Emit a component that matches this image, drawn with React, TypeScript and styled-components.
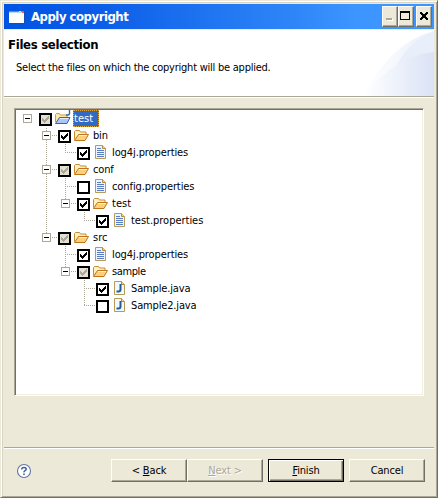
import React from 'react';
import styled, { createGlobalStyle } from 'styled-components';

const face = '#ece9d8';
const shade = '#aca899';
const dark = '#716f64';

const GlobalStyle = createGlobalStyle`
  *, *::before, *::after { box-sizing: border-box; }
  body { margin: 0; background: ${face}; }
`;

const Dialog = styled.div`
  display: flex;
  flex-direction: column;
  width: 438px;
  height: 498px;
  padding: 2px;
  background: ${face};
  border: 1px solid;
  border-color: ${face} ${dark} ${dark} ${face};
  box-shadow: inset 1px 1px #fff, inset -1px -1px ${shade}, inset 2px 2px #d8d4c8;
  font: 11px/17px 'DejaVu Sans Condensed', 'DejaVu Sans', sans-serif;
  font-stretch: condensed;
  color: #000;
  overflow: hidden;
`;

const Content = styled.div`
  display: flex;
  flex-direction: column;
  flex: 1;
  margin: 1px;
`;

const TitleBar = styled.div`
  display: flex;
  align-items: center;
  height: 25px;
  padding: 0 2px 0 5px;
  background: linear-gradient(90deg, #0054e3 0%, #0a5ce7 20%, #2f86f8 68%, #3d95ff 82%, #3d95ff 100%);
`;

const Title = styled.div`
  flex: 1;
  margin-left: 6px;
  color: #fff;
  font-size: 13px;
  font-weight: bold;
  letter-spacing: -0.48px;
`;

const raised = `
  background: ${face};
  border: 1px solid;
  border-color: #fff ${dark} ${dark} #fff;
  box-shadow: inset -1px -1px ${shade};
`;

const CaptionButton = styled.button<{ $gap?: number }>`
  ${raised}
  width: 16px;
  height: 21px;
  padding: 0;
  margin-left: ${p => p.$gap ?? 0}px;
  display: block;
`;

const Header = styled.div`
  display: flex;
  justify-content: space-between;
  height: 69px;
  padding-bottom: 1px;
  border-top: 1px solid #e3eefa;
  border-bottom: 1px solid #fff;
  background: linear-gradient(${shade}, ${shade}) bottom / 100% 1px no-repeat padding-box #fff;
`;

const HeaderText = styled.div`
  padding: 6px 0 0 4px;
  white-space: nowrap;
`;

const Heading = styled.div`
  font-size: 13px;
  font-weight: bold;
  line-height: 18px;
  letter-spacing: -0.3px;
`;

const Description = styled.div`
  margin: 5px 0 0 8px;
  line-height: 17px;
  letter-spacing: -0.24px;
`;

const Tree = styled.div`
  width: 410px;
  height: 288px;
  margin: 10px 0 0 10px;
  background: #fff;
  border: 1px solid;
  border-color: ${shade} #fff #fff ${shade};
  box-shadow: inset 1px 1px ${dark}, inset -1px -1px #f1efe2;
  padding: 1px;
`;

const TreeRow = styled.div`
  display: flex;
  align-items: flex-start;
  height: 17px;
`;

const Check = styled.span<{ $partial?: boolean }>`
  width: 13px;
  height: 13px;
  margin-top: 3px;
  border: 2px solid #000;
  background: ${p => (p.$partial ? '#e3e1d3' : '#fff')};
  svg { display: block; }
`;

const IconSlot = styled.span`
  width: 16px;
  height: 16px;
  margin: 0 2px 0 3px;
  svg { display: block; overflow: visible; }
`;

const Label = styled.span<{ $selected?: boolean; $spacing: number }>`
  height: 17px;
  padding: 1px 1px 0;
  line-height: 16px;
  letter-spacing: ${p => p.$spacing}px;
  white-space: nowrap;
  width: ${p => (p.$selected ? '26px' : 'auto')};
  color: ${p => (p.$selected ? '#fff' : '#000')};
  background: ${p => (p.$selected ? '#316ac5' : 'transparent')};
  outline: ${p => (p.$selected ? '1px dotted #e6a53a' : 'none')};
  outline-offset: -1px;
`;

const Footer = styled.div`
  display: flex;
  align-items: flex-start;
  height: 47px;
  margin-top: auto;
  padding: 11px 9px 0 12px;
  border-top: 1px solid ${shade};
  box-shadow: inset 0 1px #fff;
`;

const Help = styled.span`
  width: 16px;
  height: 16px;
  margin: 4px auto 0 0;
  svg { display: block; }
`;

const PushButton = styled.button<{ $gap?: number; $default?: boolean }>`
  ${raised}
  width: 76px;
  height: 23px;
  padding: 1px 0 0;
  margin-left: ${p => p.$gap ?? 0}px;
  font: inherit;
  line-height: 20px;
  letter-spacing: -0.15px;
  color: #000;
  ${p => p.$default && `border-color: #000; box-shadow: inset 1px 1px #fff, inset -1px -1px ${dark}, inset -2px -2px ${shade};`}
  &:disabled { color: ${shade}; text-shadow: 1px 1px #fff; }
  u { text-underline-offset: 1px; }
`;

type Kind = 'project' | 'folder' | 'text' | 'java';
type Node = {
  name: string;
  level: number;
  kind: Kind;
  state: 'on' | 'off' | 'partial';
  spacing: number;
  last?: boolean;
  through?: number[];
};

const nodes: Node[] = [
  { name: 'test', level: 0, kind: 'project', state: 'partial', spacing: 0, last: true },
  { name: 'bin', level: 1, kind: 'folder', state: 'on', spacing: -0.2 },
  { name: 'log4j.properties', level: 2, kind: 'text', state: 'on', spacing: -0.1, last: true, through: [1] },
  { name: 'conf', level: 1, kind: 'folder', state: 'partial', spacing: -0.15 },
  { name: 'config.properties', level: 2, kind: 'text', state: 'off', spacing: -0.09, through: [1] },
  { name: 'test', level: 2, kind: 'folder', state: 'on', spacing: 0, last: true, through: [1] },
  { name: 'test.properties', level: 3, kind: 'text', state: 'on', spacing: -0.02, last: true, through: [1] },
  { name: 'src', level: 1, kind: 'folder', state: 'partial', spacing: 0, last: true },
  { name: 'log4j.properties', level: 2, kind: 'text', state: 'on', spacing: -0.1 },
  { name: 'sample', level: 2, kind: 'folder', state: 'partial', spacing: -0.4, last: true },
  { name: 'Sample.java', level: 3, kind: 'java', state: 'on', spacing: -0.15 },
  { name: 'Sample2.java', level: 3, kind: 'java', state: 'off', spacing: -0.15, last: true },
];

/* Dotted connector lines and the expander box to the left of a row. */
function Guides({ node, index }: { node: Node; index: number }) {
  const { level, last, through = [] } = node;
  const branch = node.kind === 'folder' || node.kind === 'project';
  const center = (l: number) => 11.5 + 19 * l;
  const x = center(level);
  const vertical = (l: number, end: number) => (
    <path key={l} d={`M${center(l)} 0V${end}`} stroke="#aca899" strokeDasharray="1 1" strokeDashoffset={index % 2} />
  );
  return (
    <svg width={23 + 19 * level} height="17" fill="none" shapeRendering="crispEdges">
      {through.map(l => vertical(l, 17))}
      {level > 0 && vertical(level, last ? 9 : 17)}
      {level > 0 && <path d={`M${x - 0.5} 8.5H${22 + 19 * level}`} stroke="#aca899" strokeDasharray="1 1" />}
      {branch && (
        <>
          <rect x={x - 4} y="4.5" width="8" height="8" fill="#fff" stroke="#aca899" />
          <path d={`M${x - 2.5} 8.5h5`} stroke="#000" />
        </>
      )}
    </svg>
  );
}

function FolderArt() {
  return (
    <svg width="16" height="16" viewBox="1 0 16 16">
      <path d="M1.5 12.5V4.5l1-1h4l1 1.5h5.5v3" fill="#fff0bf" stroke="#c88a35" />
      <path d="M1.5 13.5 5.5 7.5h10L12 13.5z" fill="#fad07c" stroke="#c0741c" strokeLinejoin="round" />
      <path d="M6 8.5h8" stroke="#fff1c8" />
    </svg>
  );
}

function ProjectArt() {
  return (
    <svg width="16" height="16" viewBox="1 0 16 16">
      <path d="M1.5 12V4.5l1-1h3l1 1.5h6.5v3" fill="#ffe7a8" stroke="#d19a45" />
      <path d="M1.5 13.5 5.5 7.5h10.5L13 13.5z" fill="#a9c8f5" stroke="#3c5fb0" strokeLinejoin="round" />
      <path d="M6 8.5h8.5" stroke="#e2efff" />
      <path d="M15.5 0v3.2q0 1.8-1.8 1.8H12" fill="none" stroke="#336c9e" strokeWidth="1.4" />
    </svg>
  );
}

function PageArt({ java }: { java?: boolean }) {
  return (
    <svg width="16" height="16" viewBox="0 0 16 16">
      <path d="M2.5 1.5h7l3 3v10h-10z" fill={java ? '#f3f8ff' : '#eef4ff'} stroke="#b59a58" />
      <path d="M9.5 1.5v3h3" fill="#f1d48b" stroke="#b88c35" />
      {java ? (
        <path d="M8.5 4v5.3q0 2.2-2 2.2H4.5" fill="none" stroke="#1d5c9c" strokeWidth="2" />
      ) : (
        <path d="M4 4.5h4M4 6.5h7M4 8.5h7M4 10.5h7M4 12.5h7" stroke="#5b7cc0" />
      )}
    </svg>
  );
}

function NodeIcon({ kind }: { kind: Kind }) {
  if (kind === 'project') return <ProjectArt />;
  if (kind === 'folder') return <FolderArt />;
  return <PageArt java={kind === 'java'} />;
}

function Row({ node, index }: { node: Node; index: number }) {
  return (
    <TreeRow>
      <Guides node={node} index={index} />
      <Check $partial={node.state === 'partial'}>
        {node.state !== 'off' && (
          <svg width="9" height="9" shapeRendering="crispEdges">
            <path
              d="M1 3h1v1h1v1h1v-1h1v-1h1v-1h1v-1h1v3h-1v1h-1v1h-1v1h-1v1h-1v-1h-1v-1h-1z"
              fill={node.state === 'partial' ? '#aca899' : '#000'}
            />
          </svg>
        )}
      </Check>
      <IconSlot><NodeIcon kind={node.kind} /></IconSlot>
      <Label $selected={index === 0} $spacing={node.spacing}>{node.name}</Label>
    </TreeRow>
  );
}

function AppIcon() {
  return (
    <svg width="16" height="16" viewBox="0 0 16 16" shapeRendering="crispEdges">
      <path d="M0 2h15v12H0z" fill="#fffffa" />
      <path d="M0 2h15v1H0z" fill="#4b91df" />
      <path d="M0 3h15v1H0z" fill="#b9d8f6" />
      <path d="M10 2h2v1h-2z" fill="#e8ddcf" />
      <path d="M13 2h2v2h-2z" fill="#ed6044" />
      <path d="M0 14h15v1H0zM15 3h1v12h-1z" fill="#174fae" />
    </svg>
  );
}

function HeaderArt() {
  return (
    <svg width="75" height="66" viewBox="0 0 75 66">
      <defs>
        <linearGradient id="outer"><stop stopColor="#fff" /><stop offset="1" stopColor="#e9effa" /></linearGradient>
        <linearGradient id="inner"><stop stopColor="#fff" /><stop offset=".45" stopColor="#eef2fb" /><stop offset="1" stopColor="#dae2f5" /></linearGradient>
      </defs>
      <path d="M5 66Q30 13 75 1V66z" fill="url(#outer)" />
      <path d="M36 38Q51 9 75 2V38z" fill="#e9effa" />
      <path d="M5 66Q36 26 75 22V66z" fill="url(#inner)" />
    </svg>
  );
}

export default function App() {
  return (
    <>
      <GlobalStyle />
      <Dialog>
        <Content>
          <TitleBar>
            <AppIcon />
            <Title>Apply copyright</Title>
            <CaptionButton aria-label="Minimize">
              <svg width="14" height="19" shapeRendering="crispEdges">
                <path d="M4 12h6v2H4z" fill="#fff" /><path d="M3 11h6v2H3z" fill="#aca899" />
              </svg>
            </CaptionButton>
            <CaptionButton aria-label="Maximize">
              <svg width="14" height="19" shapeRendering="crispEdges">
                <path d="M1 4h10v9H1zM2 6v6h8V6z" fillRule="evenodd" />
              </svg>
            </CaptionButton>
            <CaptionButton $gap={2} aria-label="Close">
              <svg width="14" height="19" shapeRendering="crispEdges">
                <path d="M3 5h2v1h1v1h2v-1h1v-1h2v2h-1v1h-1v2h1v1h1v2h-2v-1h-1v-1h-2v1h-1v1h-2v-2h1v-1h1v-2h-1v-1h-1z" />
              </svg>
            </CaptionButton>
          </TitleBar>
          <Header>
            <HeaderText>
              <Heading>Files selection</Heading>
              <Description>Select the files on which the copyright will be applied.</Description>
            </HeaderText>
            <HeaderArt />
          </Header>
          <Tree>
            {nodes.map((node, i) => <Row key={i} node={node} index={i} />)}
          </Tree>
          <Footer>
            <Help>
              <svg width="16" height="16" viewBox="0 0 16 16" fill="none">
                <circle cx="8" cy="8" r="6.5" fill="#fff" stroke="#6077a5" strokeWidth="1.1" />
                <path d="M5.7 6.6V6q.2-1.6 2.3-1.6T10.3 6q0 1-1.2 1.6T8 9.4" stroke="#415c91" strokeWidth="1.5" />
                <path d="M7.2 10.5h1.6V12H7.2z" fill="#415c91" />
              </svg>
            </Help>
            <PushButton>&lt; <u>B</u>ack</PushButton>
            <PushButton disabled><u>N</u>ext &gt;</PushButton>
            <PushButton $gap={5} $default><u>F</u>inish</PushButton>
            <PushButton $gap={5}>Cancel</PushButton>
          </Footer>
        </Content>
      </Dialog>
    </>
  );
}
